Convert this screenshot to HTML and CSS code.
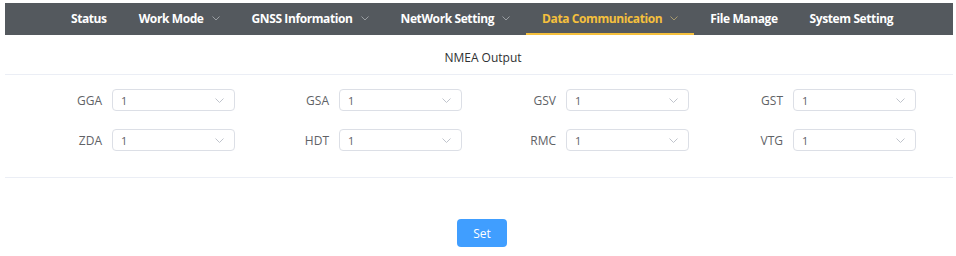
FILE: index.html
```html
<!DOCTYPE html>
<html>
<head>
<meta charset="utf-8">
<link rel="stylesheet" href="styles.css">
</head>
<body>
<div class="page">
  <nav class="menu">
    <div class="item">Status</div>
    <div class="item">Work Mode<span class="chev"><svg width="8" height="5" viewBox="0 0 8 5"><path d="M0.5 0.5 L4 4 L7.5 0.5" fill="none" stroke="currentColor" stroke-width="1"/></svg></span></div>
    <div class="item">GNSS Information<span class="chev"><svg width="8" height="5" viewBox="0 0 8 5"><path d="M0.5 0.5 L4 4 L7.5 0.5" fill="none" stroke="currentColor" stroke-width="1"/></svg></span></div>
    <div class="item">NetWork Setting<span class="chev"><svg width="8" height="5" viewBox="0 0 8 5"><path d="M0.5 0.5 L4 4 L7.5 0.5" fill="none" stroke="currentColor" stroke-width="1"/></svg></span></div>
    <div class="item active">Data Communication<span class="chev"><svg width="8" height="5" viewBox="0 0 8 5"><path d="M0.5 0.5 L4 4 L7.5 0.5" fill="none" stroke="currentColor" stroke-width="1"/></svg></span></div>
    <div class="item">File Manage</div>
    <div class="item">System Setting</div>
  </nav>
  <section class="card">
    <div class="title">NMEA Output</div>
    <div class="grid">
      <div class="field"><label>GGA</label><div class="select"><span>1</span><svg width="9" height="5" viewBox="0 0 9 5"><path d="M0.5 0.5 L4.5 4.5 L8.5 0.5" fill="none" stroke="currentColor" stroke-width="1"/></svg></div></div>
      <div class="field"><label>GSA</label><div class="select"><span>1</span><svg width="9" height="5" viewBox="0 0 9 5"><path d="M0.5 0.5 L4.5 4.5 L8.5 0.5" fill="none" stroke="currentColor" stroke-width="1"/></svg></div></div>
      <div class="field"><label>GSV</label><div class="select"><span>1</span><svg width="9" height="5" viewBox="0 0 9 5"><path d="M0.5 0.5 L4.5 4.5 L8.5 0.5" fill="none" stroke="currentColor" stroke-width="1"/></svg></div></div>
      <div class="field"><label>GST</label><div class="select"><span>1</span><svg width="9" height="5" viewBox="0 0 9 5"><path d="M0.5 0.5 L4.5 4.5 L8.5 0.5" fill="none" stroke="currentColor" stroke-width="1"/></svg></div></div>
      <div class="field"><label>ZDA</label><div class="select"><span>1</span><svg width="9" height="5" viewBox="0 0 9 5"><path d="M0.5 0.5 L4.5 4.5 L8.5 0.5" fill="none" stroke="currentColor" stroke-width="1"/></svg></div></div>
      <div class="field"><label>HDT</label><div class="select"><span>1</span><svg width="9" height="5" viewBox="0 0 9 5"><path d="M0.5 0.5 L4.5 4.5 L8.5 0.5" fill="none" stroke="currentColor" stroke-width="1"/></svg></div></div>
      <div class="field"><label>RMC</label><div class="select"><span>1</span><svg width="9" height="5" viewBox="0 0 9 5"><path d="M0.5 0.5 L4.5 4.5 L8.5 0.5" fill="none" stroke="currentColor" stroke-width="1"/></svg></div></div>
      <div class="field"><label>VTG</label><div class="select"><span>1</span><svg width="9" height="5" viewBox="0 0 9 5"><path d="M0.5 0.5 L4.5 4.5 L8.5 0.5" fill="none" stroke="currentColor" stroke-width="1"/></svg></div></div>
    </div>
  </section>
  <div class="actions"><button class="btn">Set</button></div>
</div>
</body>
</html>
```
FILE: styles.css
```css
* { box-sizing: border-box; }
body {
  margin: 0;
  background: #fff;
  font-family: "Open Sans", "Noto Sans", sans-serif;
}
.page {
  padding: 3px 3px 0 5px;
}
.menu {
  height: 32px;
  background: #54595e;
  display: flex;
  justify-content: center;
  padding-left: 6px;
}
.item {
  height: 32px;
  padding: 0 16px;
  display: flex;
  align-items: center;
  color: #fff;
  font-weight: 700;
  font-size: 12px;
  letter-spacing: -0.4px;
  border-bottom: 2px solid transparent;
  padding-top: 1px;
}
.item.active {
  color: #f5c03d;
  border-bottom-color: #f5c03d;
}
.chev {
  display: flex;
  margin-left: 8px;
  color: #9a9ea2;
}
.item.active .chev { color: #a79a6e; }
.card {
  border-bottom: 1px solid #ebeef5;
}
.title {
  height: 40px;
  display: flex;
  align-items: center;
  justify-content: center;
  font-size: 12px;
  color: #303133;
  border-bottom: 1px solid #ebeef5;
  padding: 5px 0 0 8px;
}
.grid {
  display: grid;
  grid-template-columns: repeat(4, 227px);
  row-gap: 18px;
  padding: 14px 0 26px 3px;
}
.field {
  display: flex;
  justify-content: flex-end;
  align-items: center;
}
.field label {
  font-size: 12px;
  color: #606266;
  margin-right: 10px;
}
.select {
  width: 123px;
  height: 22px;
  border: 1px solid #dcdfe6;
  border-radius: 4px;
  display: flex;
  align-items: center;
  justify-content: space-between;
  padding: 0 10px 0 8px;
  font-size: 11px;
  color: #606266;
}
.select svg { color: #c0c4cc; }
.actions {
  display: flex;
  justify-content: center;
  padding-top: 41px;
  padding-left: 6px;
}
.btn {
  width: 50px;
  height: 28px;
  border: none;
  border-radius: 4px;
  background: #409eff;
  color: #fff;
  font-family: "Open Sans", "Noto Sans", sans-serif;
  font-size: 12px;
  padding: 0;
}
```
